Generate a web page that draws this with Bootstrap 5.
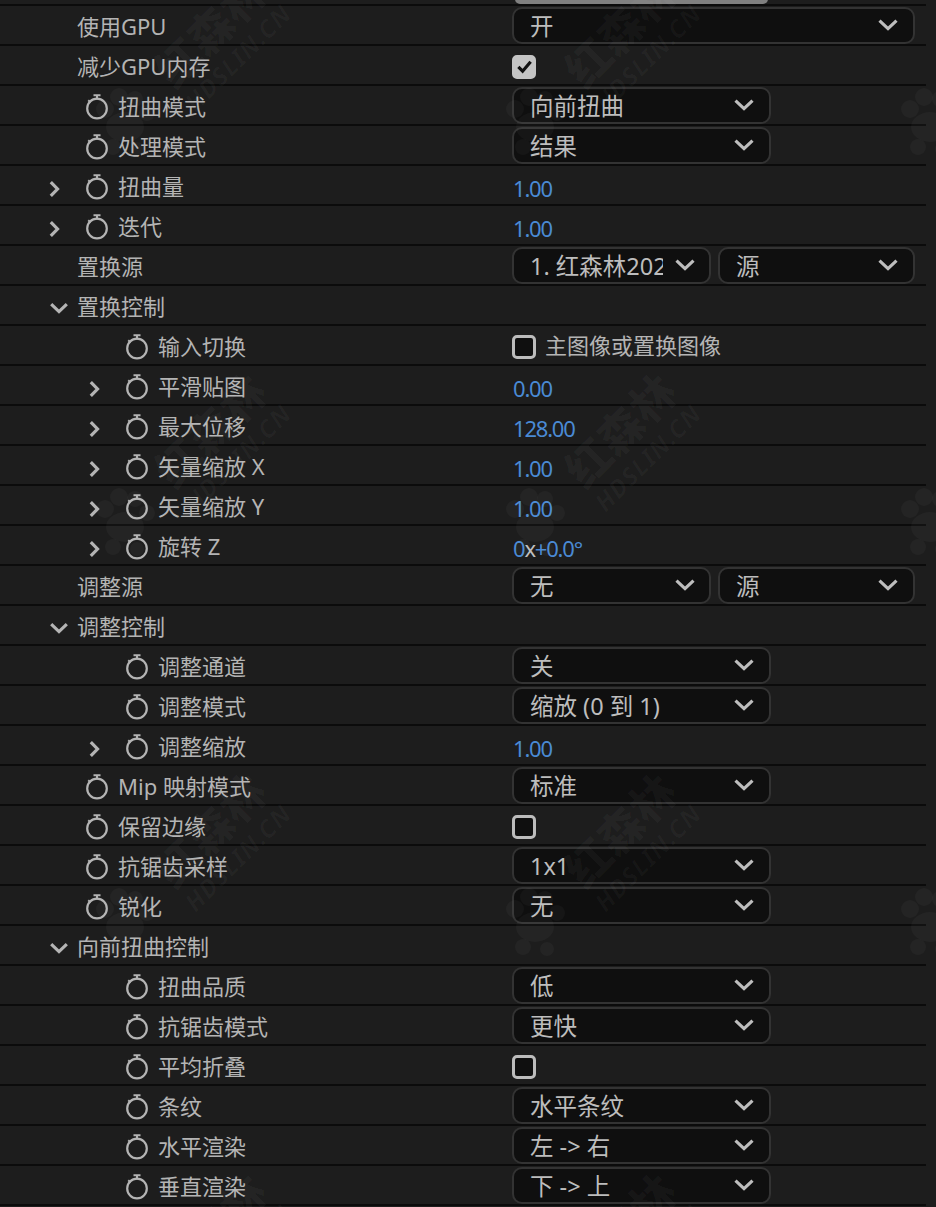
<!DOCTYPE html>
<html lang="zh">
<head>
    <meta charset="UTF-8">
    <title>效果控件</title>
    <link href="https://cdn.jsdelivr.net/npm/bootstrap@5.3.0/dist/css/bootstrap.min.css" rel="stylesheet">
    <style>
        html, body { background: #1d1d1d; height: 1207px; overflow: hidden; }
        body { font-family: "Noto Sans", "Noto Sans CJK SC", sans-serif; font-size: 22px; color: #b4b4b4; position: relative; }
        .top-pill { width: 253px; height: 5px; margin-left: 515px; margin-top: -1px; background: #808080; border-radius: 0 0 14px 14px; }
        .top-line { height: 2px; background: #0b0b0b; margin-right: 10px; }
        .fx-row { height: 40px; border-bottom: 2px solid #0b0b0b; margin-right: 10px; }
        .name-col { width: 512px; flex: none; padding-top: 2px; }
        .val-col { width: 404px; flex: none; gap: 7px; }
        .arrow-slot { width: 30px; flex: none; }
        .lvl1 { padding-left: 47px; }
        .lvl2 { padding-left: 87px; }
        .watch { width: 24px; height: 27px; margin-left: 8px; margin-right: 9px; flex: none; margin-top: 1px; }
        .arr { width: 24px; height: 18px; display: block; margin-top: 5px; }
        .fx-select { height: 37px; background: #0f0f0f; border: 2px solid #333; border-radius: 10px; padding: 3px 15px 0 16px; color: #bdbdbd; overflow: hidden; white-space: nowrap; font-size: 23.5px; }
        .sel-wide { width: 403px; }
        .sel-mid { width: 259px; }
        .sel-half { width: 199px; }
        .sel-half2 { width: 197px; }
        .sel-text { flex: 1 1 auto; overflow: hidden; min-width: 0; }
        .sel-half .sel-text { flex: 0 0 133px; margin-right: 12px; }
        .drop { width: 20px; height: 12px; flex: none; margin-top: -3px; }
        .num { color: #4a8ad4; font-size: 22px; letter-spacing: -1.2px; padding-left: 1px; margin-top: 6px; }
        .num i { color: #c0c0c0; font-style: normal; }
        .cbox { width: 24px; height: 24px; border-radius: 5px; flex: none; border: 3.5px solid #bcbcbc; background: #0f0f0f; margin-top: 3px; }
        .cbox-on { background: #c4c4c4; border-color: #c4c4c4; }
        .cbox-on svg { display: block; width: 17px; height: 17px; }
        .cbox-label { margin-left: 2px; margin-top: 1px; }
        .mark-wrap { position: absolute; left: 0; top: 0; width: 936px; height: 1207px; overflow: hidden; pointer-events: none; }
        .wmark { position: absolute; transform: translate(-50%, -50%) rotate(-45deg); color: rgba(255,255,255,.03); font-weight: 700; line-height: 1.1; text-align: center; white-space: nowrap; }
        .wmark b { display: block; font-size: 45px; }
        .wmark span { display: block; font-size: 25px; letter-spacing: 1px; font-style: italic; }
        .paw { position: absolute; width: 64px; height: 76px; transform: translate(-50%, -50%); fill: rgba(255,255,255,.03); }
    </style>
</head>
<body>
    <svg width="0" height="0" class="position-absolute">
        <symbol id="watch" viewBox="0 0 24 27">
            <path d="M8.5 2.2h7M12 2.2v4.2" fill="none" stroke="currentColor" stroke-width="2"/>
            <path d="M3.2 7.2l2.6 2.2" fill="none" stroke="currentColor" stroke-width="2"/>
            <circle cx="12" cy="15.5" r="9.8" fill="none" stroke="currentColor" stroke-width="2.2"/>
        </symbol>
        <symbol id="right" viewBox="0 0 24 18">
            <path d="M3.8 2.2L10.5 9L3.8 15.8" fill="none" stroke="currentColor" stroke-width="3.2"/>
        </symbol>
        <symbol id="down" viewBox="0 0 24 18">
            <path d="M4.2 4.2L12 11.6L19.8 4.2" fill="none" stroke="currentColor" stroke-width="3.2"/>
        </symbol>
        <symbol id="drop" viewBox="0 0 20 12">
            <path d="M1.5 1.6L10 9.6L18.5 1.6" fill="none" stroke="currentColor" stroke-width="3.2"/>
        </symbol>
        <symbol id="pawshape" viewBox="0 0 64 76">
            <circle cx="12" cy="22" r="9"/><circle cx="26" cy="10" r="9"/><circle cx="42" cy="12" r="8"/><circle cx="54" cy="26" r="8"/>
            <ellipse cx="32" cy="40" rx="19" ry="15"/><circle cx="20" cy="60" r="8"/><circle cx="44" cy="62" r="7"/>
        </symbol>
    </svg>

    <div class="top-pill"></div>
    <div class="top-line"></div>

    <div id="rows"></div>

    <div class="mark-wrap" id="marks"></div>

    <script>
        // a = arrow (r/d), w = stopwatch, l = indent level
        const rows = [
            { n: '使用GPU', l: 1, sel: [['开', 'sel-wide']] },
            { n: '减少GPU内存', l: 1, check: true },
            { n: '扭曲模式', l: 1, w: 1, sel: [['向前扭曲', 'sel-mid']] },
            { n: '处理模式', l: 1, w: 1, sel: [['结果', 'sel-mid']] },
            { n: '扭曲量', l: 1, w: 1, a: 'r', num: '1.00' },
            { n: '迭代', l: 1, w: 1, a: 'r', num: '1.00' },
            { n: '置换源', l: 1, sel: [['1. 红森林2025', 'sel-half'], ['源', 'sel-half2']] },
            { n: '置换控制', l: 1, a: 'd' },
            { n: '输入切换', l: 2, w: 1, check: false, label: '主图像或置换图像' },
            { n: '平滑贴图', l: 2, w: 1, a: 'r', num: '0.00' },
            { n: '最大位移', l: 2, w: 1, a: 'r', num: '128.00' },
            { n: '矢量缩放 X', l: 2, w: 1, a: 'r', num: '1.00' },
            { n: '矢量缩放 Y', l: 2, w: 1, a: 'r', num: '1.00' },
            { n: '旋转 Z', l: 2, w: 1, a: 'r', num: '0<i>x</i>+0.0°' },
            { n: '调整源', l: 1, sel: [['无', 'sel-half'], ['源', 'sel-half2']] },
            { n: '调整控制', l: 1, a: 'd' },
            { n: '调整通道', l: 2, w: 1, sel: [['关', 'sel-mid']] },
            { n: '调整模式', l: 2, w: 1, sel: [['缩放 (0 到 1)', 'sel-mid']] },
            { n: '调整缩放', l: 2, w: 1, a: 'r', num: '1.00' },
            { n: 'Mip 映射模式', l: 1, w: 1, sel: [['标准', 'sel-mid']] },
            { n: '保留边缘', l: 1, w: 1, check: false },
            { n: '抗锯齿采样', l: 1, w: 1, sel: [['1x1', 'sel-mid']] },
            { n: '锐化', l: 1, w: 1, sel: [['无', 'sel-mid']] },
            { n: '向前扭曲控制', l: 1, a: 'd' },
            { n: '扭曲品质', l: 2, w: 1, sel: [['低', 'sel-mid']] },
            { n: '抗锯齿模式', l: 2, w: 1, sel: [['更快', 'sel-mid']] },
            { n: '平均折叠', l: 2, w: 1, check: false },
            { n: '条纹', l: 2, w: 1, sel: [['水平条纹', 'sel-mid']] },
            { n: '水平渲染', l: 2, w: 1, sel: [['左 -> 右', 'sel-mid']] },
            { n: '垂直渲染', l: 2, w: 1, sel: [['下 -> 上', 'sel-mid']] }
        ];

        function rowHtml(r) {
            let left = '';
            if (r.a) left += `<span class="arrow-slot"><svg class="arr"><use href="#${r.a === 'r' ? 'right' : 'down'}"/></svg></span>`;
            else left += '<span class="arrow-slot"></span>';
            if (r.w) left += '<svg class="watch"><use href="#watch"/></svg>';
            let right = '';
            if (r.sel) {
                right = r.sel.map(s => `<div class="fx-select d-flex align-items-center ${s[1]}"><span class="sel-text">${s[0].replace('->', '-&gt;')}</span><svg class="drop"><use href="#drop"/></svg></div>`).join('');
            } else if (r.num) {
                right = `<span class="num">${r.num}</span>`;
            } else if (r.check === true) {
                right = '<span class="cbox cbox-on d-flex align-items-center justify-content-center"><svg viewBox="0 0 18 18"><path d="M2.5 9.5l4.5 4.5 8.5-10" fill="none" stroke="#111" stroke-width="3.4"/></svg></span>';
            } else if (r.check === false) {
                right = '<span class="cbox"></span>' + (r.label ? `<span class="cbox-label">${r.label}</span>` : '');
            }
            return `<div class="fx-row d-flex align-items-center">
                <div class="name-col d-flex align-items-center ${r.l === 2 ? 'lvl2' : 'lvl1'}">${left}<span>${r.n}</span></div>
                <div class="val-col d-flex align-items-center">${right}</div>
            </div>`;
        }
        document.getElementById('rows').innerHTML = rows.map(rowHtml).join('');

        // faint watermark stamps, tiled every 410 x 400
        let marks = '';
        [220, 630].forEach(x => {
            [40, 440, 840, 1240].forEach(y => {
                marks += `<div class="wmark" style="left:${x}px;top:${y}px"><b>红森林</b><span>HDSLIN.CN</span></div>`;
            });
        });
        [125, 535, 930].forEach(x => {
            [125, 525, 925].forEach(y => {
                marks += `<svg class="paw" style="left:${x}px;top:${y}px"><use href="#pawshape"/></svg>`;
            });
        });
        document.getElementById('marks').innerHTML = marks;
    </script>

    <script src="https://cdn.jsdelivr.net/npm/bootstrap@5.3.0/dist/js/bootstrap.bundle.min.js"></script>
</body>
</html>
